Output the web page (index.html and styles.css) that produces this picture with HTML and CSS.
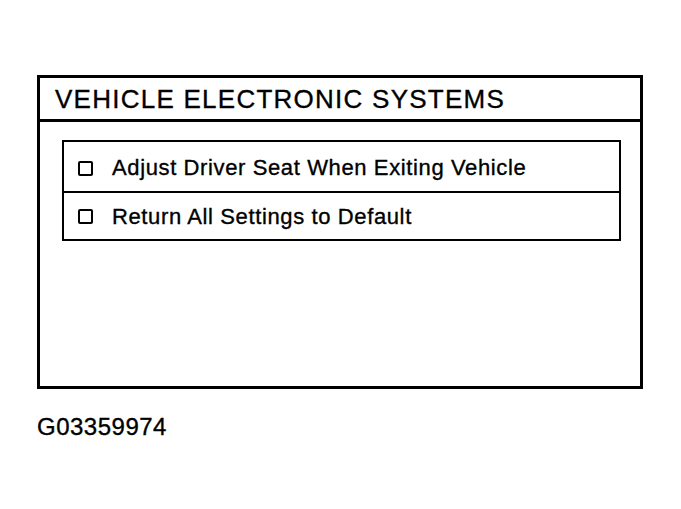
FILE: index.html
```html
<!DOCTYPE html>
<html>
<head>
<meta charset="utf-8">
<link rel="stylesheet" href="styles.css">
</head>
<body>
<div class="panel">
  <div class="panel-header">VEHICLE ELECTRONIC SYSTEMS</div>
  <div class="panel-body">
    <div class="options">
      <div class="option option-first"><span class="check"></span><span class="label">Adjust Driver Seat When Exiting Vehicle</span></div>
      <div class="option option-last"><span class="check"></span><span class="label">Return All Settings to Default</span></div>
    </div>
  </div>
</div>
<div class="caption">G03359974</div>
</body>
</html>
```
FILE: styles.css
```css
html, body {
  margin: 0;
  padding: 0;
  background: #fff;
  color: #000;
  font-family: "Liberation Sans", Arial, sans-serif;
}
body {
  padding: 75px 0 0 37px;
}
.panel {
  width: 600px;
  height: 308px;
  border: 3px solid #000;
  display: flex;
  flex-direction: column;
}
.panel-header {
  height: 44px;
  border-bottom: 3px solid #000;
  display: flex;
  align-items: center;
  padding-left: 15px;
  padding-top: 2px;
  box-sizing: border-box;
  font-size: 26px;
  letter-spacing: 1.25px;
  -webkit-text-stroke: 0.35px #000;
}
.panel-body {
  padding: 18px 0 0 22px;
}
.options {
  width: 555px;
  border: 2px solid #000;
}
.option {
  display: flex;
  align-items: center;
  font-size: 22px;
  letter-spacing: 0.62px;
  -webkit-text-stroke: 0.35px #000;
}
.option-first {
  height: 51px;
  padding-top: 3px;
  box-sizing: border-box;
  border-bottom: 2px solid #000;
}
.option-last {
  height: 46px;
  padding-top: 1px;
  box-sizing: border-box;
}
.check {
  width: 11px;
  height: 11px;
  border: 2.5px solid #000;
  border-radius: 2px;
  margin-left: 14px;
  margin-right: 19px;
}
.label {
  line-height: 1;
}
.caption {
  margin-top: 24px;
  font-size: 24px;
  letter-spacing: 0.5px;
  -webkit-text-stroke: 0.35px #000;
}
```
